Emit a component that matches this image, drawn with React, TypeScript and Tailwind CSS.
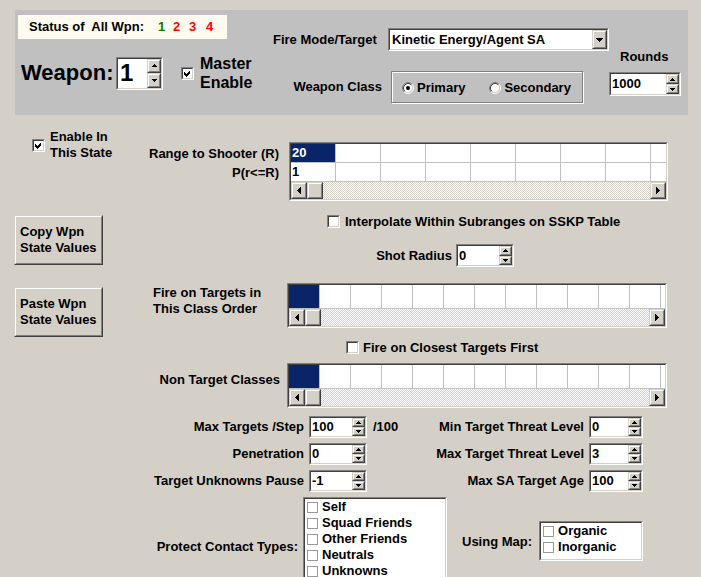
import React from "react";

type Dir = "up" | "down" | "left" | "right";

const sunkenOuter =
  "border border-t-[#808080] border-l-[#808080] border-b-white border-r-white";
const sunkenInner =
  "border border-t-[#404040] border-l-[#404040] border-b-[#d4d0c8] border-r-[#d4d0c8]";
const raisedOuter =
  "border border-t-[#d4d0c8] border-l-[#d4d0c8] border-b-[#404040] border-r-[#404040]";
const raisedInner =
  "border border-t-white border-l-white border-b-[#808080] border-r-[#808080]";

// pixel triangle built from 1px rows, like the classic win32 glyphs
const Arrow = ({ dir, size = 3 }: { dir: Dir; size?: number }) => {
  const rects = [];
  for (let i = 0; i < size; i++) {
    const len = 2 * i + 1;
    const off = size - 1 - i;
    if (dir === "up") rects.push(<rect key={i} x={off} y={i} width={len} height={1} />);
    if (dir === "down") rects.push(<rect key={i} x={off} y={size - 1 - i} width={len} height={1} />);
    if (dir === "left") rects.push(<rect key={i} x={i} y={off} width={1} height={len} />);
    if (dir === "right") rects.push(<rect key={i} x={size - 1 - i} y={off} width={1} height={len} />);
  }
  const flat = dir === "up" || dir === "down";
  return (
    <svg
      width={flat ? 2 * size - 1 : size}
      height={flat ? size : 2 * size - 1}
      shapeRendering="crispEdges"
      fill="black"
    >
      {rects}
    </svg>
  );
};

const Raised = ({ className = "", children }: { className?: string; children?: React.ReactNode }) => (
  <div className={`flex bg-[#d4d0c8] ${raisedOuter} ${className}`}>
    <div className={`flex flex-1 items-center justify-center ${raisedInner}`}>{children}</div>
  </div>
);

const Spinner = ({
  value,
  className,
  textClass = "",
  btnClass = "w-[13px]",
}: {
  value: string;
  className: string;
  textClass?: string;
  btnClass?: string;
}) => (
  <div className={`flex shrink-0 ${sunkenOuter} ${className}`}>
    <div className={`flex min-w-0 flex-1 bg-white ${sunkenInner}`}>
      <div className={`flex flex-1 items-center pl-[1px] ${textClass}`}>{value}</div>
      <div className={`flex flex-col ${btnClass}`}>
        <Raised className="flex-1">
          <Arrow dir="up" />
        </Raised>
        <Raised className="flex-1">
          <Arrow dir="down" />
        </Raised>
      </div>
    </div>
  </div>
);

const Check = ({ checked = false }: { checked?: boolean }) => (
  <div className={`h-[13px] w-[13px] shrink-0 ${sunkenOuter}`}>
    <div className={`flex h-full w-full items-center justify-center bg-white ${sunkenInner}`}>
      {checked && (
        <svg width="7" height="7" viewBox="0 0 7 7" shapeRendering="crispEdges">
          <path d="M0 2 L2 4 L6 0 V3 L2 7 L0 5 Z" fill="black" />
        </svg>
      )}
    </div>
  </div>
);

const Radio = ({ checked = false }: { checked?: boolean }) => (
  <svg width="12" height="12" viewBox="0 0 12 12" className="shrink-0">
    <circle cx="6" cy="6" r="4.5" fill="white" />
    <path d="M2.11 9.89 A5.5 5.5 0 0 1 9.89 2.11" fill="none" stroke="#808080" />
    <path d="M9.89 2.11 A5.5 5.5 0 0 1 2.11 9.89" fill="none" stroke="#ffffff" />
    <path d="M2.82 9.18 A4.5 4.5 0 0 1 9.18 2.82" fill="none" stroke="#404040" />
    <path d="M9.18 2.82 A4.5 4.5 0 0 1 2.82 9.18" fill="none" stroke="#d4d0c8" />
    {checked && <circle cx="6" cy="6" r="2" fill="black" />}
  </svg>
);

const HScroll = () => (
  <div className="flex h-[17px] bg-[image:repeating-conic-gradient(#d4d0c8_0%_25%,#ffffff_0%_50%)] bg-[length:2px_2px]">
    <Raised className="w-[16px]">
      <Arrow dir="left" size={4} />
    </Raised>
    <Raised className="w-[16px]" />
    <div className="flex-1" />
    <Raised className="w-[16px]">
      <Arrow dir="right" size={4} />
    </Raised>
  </div>
);

const Grid = ({
  rows,
  rowClass,
  cellClass,
  count,
  className,
}: {
  rows: string[];
  rowClass: string;
  cellClass: string;
  count: number;
  className: string;
}) => (
  <div className={`shrink-0 ${sunkenOuter} ${className}`}>
    <div className={`h-full overflow-hidden bg-white ${sunkenInner}`}>
      {rows.map((text, i) => (
        <div key={i} className={`flex ${rowClass}`}>
          <div
            className={`flex shrink-0 items-center border-b border-r border-[#c0c0c0] pl-[1px] ${cellClass} ${
              i === 0 ? "bg-[#0a246a] text-white" : ""
            }`}
          >
            {text}
          </div>
          {Array.from({ length: count }).map((_, j) => (
            <div key={j} className={`shrink-0 border-b border-r border-[#c0c0c0] ${cellClass}`} />
          ))}
        </div>
      ))}
      <HScroll />
    </div>
  </div>
);

const WinButton = ({ lines, className }: { lines: string[]; className: string }) => (
  <div className={`ml-[14px] flex h-[50px] w-[89px] bg-[#d4d0c8] ${raisedOuter} ${className}`}>
    <div className={`flex flex-1 flex-col justify-center pl-[4px] ${raisedInner}`}>
      {lines.map((l) => (
        <span key={l}>{l}</span>
      ))}
    </div>
  </div>
);

const ListItem = ({ label }: { label: string }) => (
  <div className="flex h-[16px] items-center">
    <div className="h-[11px] w-[11px] shrink-0 border border-[#999999] bg-white" />
    <span className="ml-[4px]">{label}</span>
  </div>
);

const SpinRow = ({
  left,
  lv,
  suffix = "",
  right,
  rv,
}: {
  left: string;
  lv: string;
  suffix?: string;
  right: string;
  rv: string;
}) => (
  <div className="flex h-[22px] items-center whitespace-nowrap">
    <div className="flex w-[164px] justify-end">
      <span>{left}</span>
    </div>
    <Spinner value={lv} className="ml-[5px] h-[22px] w-[58px]" />
    <div className="w-[61px] pl-[6px]">{suffix}</div>
    <div className="flex w-[156px] justify-end">
      <span>{right}</span>
    </div>
    <Spinner value={rv} className="ml-[5px] h-[22px] w-[54px]" />
  </div>
);

export default function App() {
  return (
    <div className="h-[577px] w-[701px] overflow-hidden bg-[#d4d0c8] font-['Liberation_Sans',Arial,sans-serif] text-[13px] font-bold leading-[16px] text-black">
      {/* top panel */}
      <div className="ml-[15px] mt-[10px] flex h-[105px] w-[673px] bg-[#c0c0c0]">
        <div className="w-[258px] shrink-0">
          <div className="ml-[3px] mt-[5px] flex h-[24px] w-[209px] items-center bg-[#fffbf0] pl-[11px]">
            <span className="w-[129px] whitespace-pre">Status of  All Wpn:</span>
            <span className="w-[15px] text-[#008000]">1</span>
            <span className="w-[16px] text-[#ff0000]">2</span>
            <span className="w-[17px] text-[#ff0000]">3</span>
            <span className="text-[#ff0000]">4</span>
          </div>
          <div className="mt-[16px] flex h-[36px] items-center">
            <span className="ml-[6px] w-[95px] text-[22px] leading-none">Weapon:</span>
            <Spinner
              value="1"
              className="h-[33px] w-[47px]"
              textClass="pl-[2px] text-[24px] leading-none"
              btnClass="w-[14px]"
            />
            <div className="ml-[18px]">
              <Check checked />
            </div>
            <div className="ml-[6px] text-[16px] leading-[19px]">
              Master
              <br />
              Enable
            </div>
          </div>
        </div>

        <div className="w-[336px] shrink-0">
          <div className="mt-[18px] flex h-[23px] items-center">
            <span className="w-[115px]">Fire Mode/Target</span>
            <div className={`flex h-[23px] w-[221px] ${sunkenOuter}`}>
              <div className={`flex flex-1 items-center bg-white ${sunkenInner}`}>
                <span className="flex-1 pl-[2px]">Kinetic Energy/Agent SA</span>
                <Raised className="h-full w-[15px]">
                  <Arrow dir="down" size={4} />
                </Raised>
              </div>
            </div>
          </div>
          <div className="mt-[20px] flex h-[32px] items-center">
            <div className="flex w-[109px] justify-end">
              <span>Weapon Class</span>
            </div>
            <div className="ml-[9px] flex h-[32px] w-[192px] items-center border border-[#808080] pt-[2px] shadow-[inset_1px_1px_0_#fff,1px_1px_0_#fff]">
              <div className="ml-[10px]">
                <Radio checked />
              </div>
              <span className="ml-[3px]">Primary</span>
              <div className="ml-[24px]">
                <Radio />
              </div>
              <span className="ml-[3px]">Secondary</span>
            </div>
          </div>
        </div>

        <div className="flex-1">
          <div className="ml-[11px] mt-[39px]">Rounds</div>
          <Spinner value="1000" className="mt-[7px] h-[24px] w-[72px]" />
        </div>
      </div>

      {/* body */}
      <div className="flex">
        <div className="w-[140px] shrink-0">
          <div className="ml-[32px] mt-[14px] flex items-center">
            <Check checked />
            <div className="ml-[5px]">
              Enable In
              <br />
              This State
            </div>
          </div>
          <WinButton lines={["Copy Wpn", "State Values"]} className="mt-[54px]" />
          <WinButton lines={["Paste Wpn", "State Values"]} className="mt-[22px]" />
        </div>

        <div className="flex-1">
          <div className="mt-[27px] flex">
            <div className="w-[139px] pt-[2px]">
              <div className="flex h-[19px] items-center justify-end whitespace-nowrap">
                Range to Shooter (R)
              </div>
              <div className="flex h-[19px] items-center justify-end">P(r&lt;=R)</div>
            </div>
            <Grid
              rows={["20", "1"]}
              rowClass="h-[19px]"
              cellClass="w-[45px]"
              count={8}
              className="ml-[10px] h-[59px] w-[379px]"
            />
          </div>

          <div className="ml-[187px] mt-[14px] flex h-[13px] items-center">
            <Check />
            <span className="ml-[5px] whitespace-nowrap">
              Interpolate Within Subranges on SSKP Table
            </span>
          </div>

          <div className="mt-[16px] flex h-[23px] items-center">
            <div className="flex w-[312px] justify-end">
              <span>Shot Radius</span>
            </div>
            <Spinner value="0" className="ml-[4px] h-[23px] w-[58px]" />
          </div>

          <div className="mt-[16px] flex">
            <div className="w-[147px] pl-[13px] pt-[2px]">
              Fire on Targets in
              <br />
              This Class Order
            </div>
            <Grid
              rows={[""]}
              rowClass="h-[24px]"
              cellClass="w-[31px]"
              count={12}
              className="h-[45px] w-[380px]"
            />
          </div>

          <div className="ml-[206px] mt-[13px] flex h-[13px] items-center">
            <Check />
            <span className="ml-[4px] whitespace-nowrap">Fire on Closest Targets First</span>
          </div>

          <div className="mt-[9px] flex">
            <div className="flex w-[140px] justify-end pt-[9px]">
              <span className="whitespace-nowrap">Non Target Classes</span>
            </div>
            <Grid
              rows={[""]}
              rowClass="h-[24px]"
              cellClass="w-[31px]"
              count={12}
              className="ml-[7px] h-[45px] w-[380px]"
            />
          </div>

          <div className="mt-[8px] flex flex-col gap-[5px]">
            <SpinRow left="Max Targets /Step" lv="100" suffix="/100" right="Min Target Threat Level" rv="0" />
            <SpinRow left="Penetration" lv="0" right="Max Target Threat Level" rv="3" />
            <SpinRow left="Target Unknowns Pause" lv="-1" right="Max SA Target Age" rv="100" />
          </div>

          <div className="mt-[5px] flex items-start">
            <div className="mt-[42px] flex w-[158px] justify-end">
              <span className="whitespace-nowrap">Protect Contact Types:</span>
            </div>
            <div className={`ml-[5px] h-[90px] w-[144px] shrink-0 ${sunkenOuter}`}>
              <div className={`h-full bg-white pl-[2px] ${sunkenInner}`}>
                <ListItem label="Self" />
                <ListItem label="Squad Friends" />
                <ListItem label="Other Friends" />
                <ListItem label="Neutrals" />
                <ListItem label="Unknowns" />
              </div>
            </div>
            <span className="ml-[15px] mt-[37px] whitespace-nowrap">Using Map:</span>
            <div className={`ml-[7px] mt-[24px] h-[40px] w-[104px] shrink-0 ${sunkenOuter}`}>
              <div className={`h-full bg-white pl-[2px] ${sunkenInner}`}>
                <ListItem label="Organic" />
                <ListItem label="Inorganic" />
              </div>
            </div>
          </div>
        </div>
      </div>
    </div>
  );
}
